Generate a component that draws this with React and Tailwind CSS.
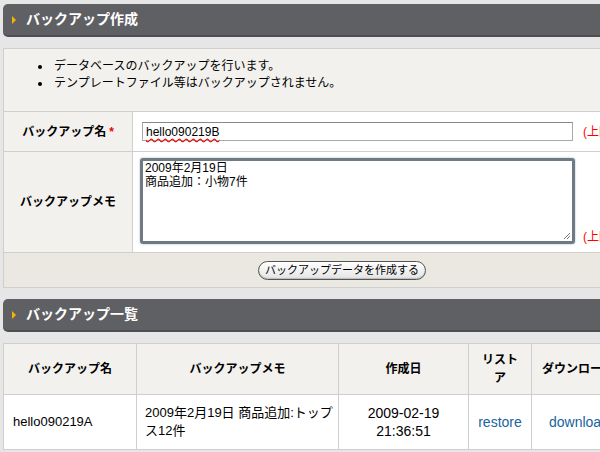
import React from 'react';

const font = { fontFamily: '"Liberation Sans", "Noto Sans CJK JP", sans-serif' };

const SectionHeader = ({ title }) => (
  <div className="flex items-center h-[33px] ml-[3px] bg-[#5f6064] rounded-l-[5px] border-b-2 border-[#4e4f53]">
    <span className="ml-[9px] w-0 h-0 border-y-[4px] border-y-transparent border-l-[4px] border-l-[#f5b400]" />
    <span className="ml-[10px] text-white font-bold text-[14px]">{title}</span>
  </div>
);

const App = () => {
  return (
    <div className="w-[600px] h-[452px] overflow-hidden bg-[#e6e6e6] text-[12px] text-black pt-[4px]" style={font}>
      <SectionHeader title="バックアップ作成" />

      {/* create form */}
      <div className="mt-[11px] ml-[3px] w-[620px] bg-[#f2f1ed] border border-[#cfcfcf]">
        <ul className="list-disc pl-[48px] pt-[9px] pb-[19px] leading-[17px]">
          <li className="pl-[2px]">データベースのバックアップを行います。</li>
          <li className="pl-[2px]">テンプレートファイル等はバックアップされません。</li>
        </ul>
        <div className="flex border-t border-[#cfcfcf] h-[40px]">
          <div className="w-[129px] shrink-0 flex items-center justify-center font-bold border-r border-[#cfcfcf]">
            バックアップ名<span className="text-[#e00] ml-[3px]">*</span>
          </div>
          <div className="flex-1 bg-white flex items-center pl-[9px] whitespace-nowrap">
            <div className="w-[431px] shrink-0 h-[19px] border border-[#a8a8a8] border-t-[#888] flex items-center pl-[3px] text-[12px]">
              <span className="underline decoration-wavy decoration-[#e00] underline-offset-2">hello090219B</span>
            </div>
            <span className="ml-[10px] text-[#f00]">(上限 50 文字)</span>
          </div>
        </div>
        <div className="flex border-t border-[#cfcfcf] h-[101px]">
          <div className="w-[129px] shrink-0 flex items-center justify-center font-bold border-r border-[#cfcfcf]">
            バックアップメモ
          </div>
          <div className="flex-1 bg-white flex items-start pl-[7px] pt-[6px] whitespace-nowrap">
            <div className="relative w-[435px] shrink-0 h-[86px] border-[3px] border-[#6e7b84] rounded-[3px] px-[2px] leading-[14px] text-[12px] shadow-[0_0_2px_#9aa]">
              <div>2009年2月19日</div>
              <div>商品追加：小物7件</div>
              <svg className="absolute right-[1px] bottom-[1px]" width="8" height="8" viewBox="0 0 8 8">
                <path d="M7 1L1 7M7 4L4 7" stroke="#777" strokeWidth="1" />
              </svg>
            </div>
            <span className="ml-[8px] mt-[70px] text-[#f00]">(上限 3000 文字)</span>
          </div>
        </div>
        <div className="flex items-center h-[35px] border-t border-[#cfcfcf] bg-[#ebe8e1] pl-[254px]">
          <button className="h-[19px] px-[6px] rounded-full border border-[#555] bg-gradient-to-b from-white to-[#e4e4e4] text-[11px] leading-none shadow-[inset_0_-1px_1px_#bbb]">
            バックアップデータを作成する
          </button>
        </div>
      </div>

      <div className="mt-[11px]">
        <SectionHeader title="バックアップ一覧" />
      </div>

      {/* list table */}
      <table className="mt-[11px] ml-[3px] w-[660px] border-collapse text-[12px] table-fixed">
        <thead>
          <tr className="bg-[#f2f1ed] h-[51px] font-bold">
            <th className="w-[133px] border border-[#cfcfcf]">バックアップ名</th>
            <th className="w-[202px] border border-[#cfcfcf]">バックアップメモ</th>
            <th className="w-[130px] border border-[#cfcfcf]">作成日</th>
            <th className="w-[63px] border border-[#cfcfcf] leading-[18px] px-[9px]">リストア</th>
            <th className="border border-[#cfcfcf] text-left pl-[10px] whitespace-nowrap">ダウンロード</th>
          </tr>
        </thead>
        <tbody className="text-[13px]">
          <tr className="bg-white h-[55px]">
            <td className="border border-[#cfcfcf] pl-[9px]">hello090219A</td>
            <td className="border border-[#cfcfcf] pl-[8px] pr-0 leading-[18px]">2009年2月19日 商品追加:トップス12件</td>
            <td className="border border-[#cfcfcf] text-center leading-[18px] text-[14px]">2009-02-19<br />21:36:51</td>
            <td className="border border-[#cfcfcf] text-center text-[#1a63a0] text-[14px]">restore</td>
            <td className="border border-[#cfcfcf] pl-[17px] text-[#1a63a0] text-[14px] whitespace-nowrap">download</td>
          </tr>
        </tbody>
      </table>
    </div>
  );
};

export default App;
